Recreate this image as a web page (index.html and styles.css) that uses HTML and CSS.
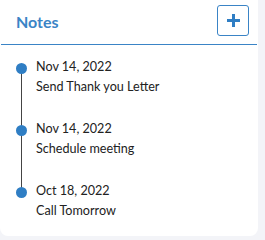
FILE: index.html
```html
<!DOCTYPE html>
<html>
<head>
<meta charset="utf-8">
<link rel="stylesheet" href="styles.css">
</head>
<body>
<div class="card">
  <div class="header">
    <h2 class="title">Notes</h2>
    <button class="add-btn" aria-label="Add note">
      <svg width="15" height="15" viewBox="0 0 15 15"><path d="M7.5 1v13M1 7.5h13" stroke="#2f7ec4" stroke-width="3" fill="none"/></svg>
    </button>
  </div>
  <ul class="timeline">
    <li class="item"><div class="date">Nov 14, 2022</div><div class="text">Send Thank you Letter</div></li>
    <li class="item"><div class="date">Nov 14, 2022</div><div class="text">Schedule meeting</div></li>
    <li class="item"><div class="date">Oct 18, 2022</div><div class="text">Call Tomorrow</div></li>
  </ul>
</div>
</body>
</html>
```
FILE: styles.css
```css
html, body {
  margin: 0;
  padding: 0;
  background: #f3f4f8;
}
body {
  font-family: Lato, "Open Sans", sans-serif;
  width: 265px;
  height: 240px;
  overflow: hidden;
}
.card {
  width: 258px;
  height: 236px;
  background: #ffffff;
  border-radius: 0 0 8px 8px;
  box-sizing: border-box;
}
.header {
  display: flex;
  align-items: center;
  justify-content: space-between;
  padding: 5px 8px 8px 15px;
  border-bottom: 1px solid #3a84c6;
  margin: 0 1px;
}
.title {
  margin: 0;
  font-size: 16px;
  font-weight: 700;
  color: #3a84c6;
  line-height: 20px;
  position: relative;
  top: 1px;
}
.add-btn {
  width: 32px;
  height: 31px;
  padding: 0;
  margin: 0;
  border: 1px solid #3a84c6;
  border-radius: 3px;
  background: #fff;
  display: flex;
  align-items: center;
  justify-content: center;
}
.add-btn svg { display: block; }
.timeline {
  list-style: none;
  margin: 0;
  padding: 12px 0 0 0;
}
.item {
  position: relative;
  padding-left: 36px;
  height: 62px;
  font-size: 12.6px;
  line-height: 20px;
  color: #222;
}
.item::before {
  content: "";
  position: absolute;
  left: 16px;
  top: 6px;
  width: 11px;
  height: 11px;
  border-radius: 50%;
  background: #2f7ec4;
  z-index: 1;
}
.item::after {
  content: "";
  position: absolute;
  left: 21px;
  top: 11px;
  width: 1px;
  height: 62px;
  background: #444;
}
.item:last-child::after { display: none; }
.date, .text { white-space: nowrap; }
```
